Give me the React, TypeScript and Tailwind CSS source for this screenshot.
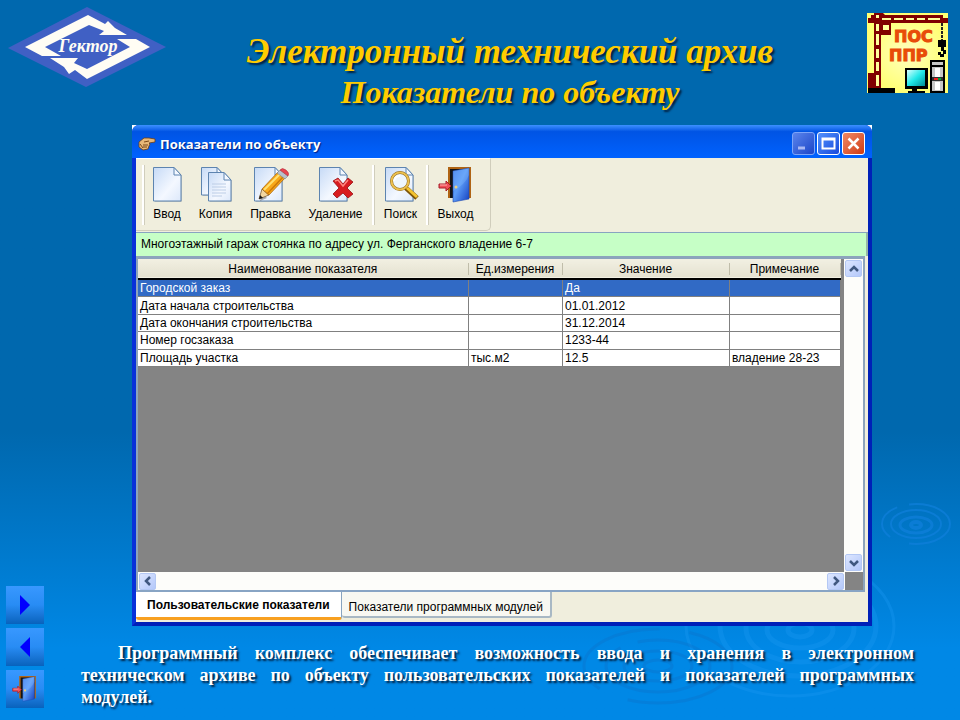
import { ReactNode, useId, useState } from "react";

const rows = [
  ["Городской заказ", "", "Да", ""],
  ["Дата начала строительства", "", "01.01.2012", ""],
  ["Дата окончания строительства", "", "31.12.2014", ""],
  ["Номер госзаказа", "", "1233-44", ""],
  ["Площадь участка", "тыс.м2", "12.5", "владение 28-23"],
];

const tabs = ["Пользовательские показатели", "Показатели программных модулей"];

const Logo = () => (
  <svg viewBox="0 0 160 80" className="mt-[7px] h-20 w-40 shrink-0" role="img" aria-label="Гектор">
    <path d="M80 0 L159 40 L79 80 L1 41 Z" fill="#4060c4" />
    <path
      d="M81 8 L98 17 L101 14 L108 21 L120 28 L92 28 L97 24 L82 18 L38 40 L54 49 L35 49 L18 40 Z"
      fill="#fffdf4"
    />
    <path
      d="M143 40 L80 72 L68 63 L62 67 L57 60 L43 51 L71 51 L67 56 L80 62 L123 40 L110 32 L129 32 Z"
      fill="#fffdf4"
    />
    <text
      x="81"
      y="45"
      textAnchor="middle"
      fill="#fffdf4"
      className="font-['Liberation_Serif',serif] text-[18px] font-bold italic"
    >
      Гектор
    </text>
  </svg>
);

const CraneBadge = () => (
  <svg viewBox="0 0 81 80" className="mt-[13px] h-20 w-[81px] shrink-0" role="img" aria-label="ПОС ППР">
    <defs>
      <linearGradient id="screen" x1="0" y1="0" x2="1" y2="1">
        <stop offset="0" stopColor="#d8ffff" />
        <stop offset=".5" stopColor="#20e8e8" />
        <stop offset="1" stopColor="#008c98" />
      </linearGradient>
      <radialGradient id="badgeGlow">
        <stop offset="0" stopColor="#ffffc0" />
        <stop offset="1" stopColor="#ffff74" />
      </radialGradient>
    </defs>
    <rect width="81" height="80" fill="url(#badgeGlow)" />
    <g fill="#800000">
      <path d="M1 5h3V2h3V0h9l2 2h58v3h5v5H1z" />
      <path d="M7 0h7v75H7zM1 60h7v16H1zM13 9h11v13H13z" />
    </g>
    <g fill="#ffff9c">
      <path d="M9 2h3v3H9zM9 11h3v7H9zM9 21h3v11H9zM9 36h3v9H9zM9 49h3v9H9zM9 62h3v11H9zM16 12h6v5h-6z" />
      <path d="M15 5h9v2h-9zM27 5h9v2h-9zM39 5h8v2h-8zM50 5h8v2h-8zM61 5h12v2H61z" />
    </g>
    <path d="M75 10v17" stroke="#222" strokeWidth="2" strokeDasharray="3 1" />
    <path d="M71 27h8v7h-2v3h2v4h-2v3h-4v-2h-2v-3h3v2h2v-3h-2v-4h-3z" fill="#000" />
    <g
      fill="#e84c08"
      stroke="#e84c08"
      strokeWidth="1"
      className="font-['DejaVu_Sans',sans-serif] text-[16px] font-bold"
    >
      <text x="27" y="29">ПОС</text>
      <text x="22" y="48">ППР</text>
    </g>
    <path d="M1 75h27v5H1zM38 55h23v21H50v2h8v2H41v-2h4v-2h-7zM63 47h15v33H63z" fill="#000" />
    <path d="M40 57h18v16H40z" fill="url(#screen)" />
    <path d="M65 49h11v3H65zM65 54h11v24H65z" fill="#c8c8c8" />
    <path d="M68 55h5v9h-5zM68 69h5v8h-5z" fill="#fff" />
    <path d="M65 64h11v4H65z" fill="#303030" />
    <path d="M67 65h4v2h-4z" fill="#f02020" />
    <path d="M71 65h3v2h-3z" fill="#00a838" />
  </svg>
);

// Water rings on the slide background
const Ripples = () => (
  <svg
    viewBox="0 0 400 240"
    aria-hidden="true"
    fill="none"
    className="pointer-events-none absolute right-0 bottom-0 h-[240px] w-[400px]"
  >
    <g stroke="#1080dc" strokeWidth="2" opacity=".7">
      <ellipse cx="356" cy="45" rx="5" ry="3" strokeWidth="4" />
      <ellipse cx="356" cy="45" rx="16" ry="8" strokeWidth="3" />
      <ellipse cx="356" cy="44" rx="25" ry="14" />
      <ellipse cx="356" cy="44" rx="34" ry="20" strokeDasharray="50 20 40 12" />
    </g>
    <g stroke="#1896f0" strokeWidth="5" opacity=".4">
      <ellipse cx="240" cy="150" rx="12" ry="7" />
      <ellipse cx="240" cy="150" rx="33" ry="18" />
      <ellipse cx="240" cy="148" rx="54" ry="34" />
      <ellipse cx="238" cy="146" rx="78" ry="50" strokeDasharray="260 22" />
      <ellipse cx="230" cy="146" rx="104" ry="70" strokeWidth="3" strokeDasharray="200 40" />
    </g>
    <g stroke="#0a74cc" strokeWidth="3" opacity=".4">
      <ellipse cx="98" cy="186" rx="14" ry="6" />
      <ellipse cx="98" cy="186" rx="34" ry="15" />
      <ellipse cx="98" cy="186" rx="52" ry="26" strokeDasharray="150 18" />
      <ellipse cx="98" cy="186" rx="74" ry="37" strokeDasharray="120 30" />
    </g>
  </svg>
);

const Sheet = ({ x = 0, y = 0, w = 28, h = 34, fill }: { x?: number; y?: number; w?: number; h?: number; fill: string }) => (
  <g transform={`translate(${x} ${y})`}>
    <path d={`M2 8H${w + 1}V${h + 1}H2z`} fill="#88909c" opacity=".4" />
    <path d={`M.5 .5H${w - 7}L${w} 8V${h}H.5z`} fill={fill} stroke="#5d84b0" />
    <path d={`M${w - 7} .5V8H${w}z`} fill="#f4f8ff" stroke="#5d84b0" />
  </g>
);

type IconName = "new" | "copy" | "edit" | "delete" | "search" | "exit";

const Icon = ({ name, className = "h-9 w-9" }: { name: IconName; className?: string }) => {
  const id = useId();
  const paper = `url(#${id}p)`;
  return (
    <svg viewBox="0 0 36 36" aria-hidden="true" className={className}>
      <defs>
        <linearGradient id={`${id}p`} x1="0" y1="0" x2="1" y2="1">
          <stop offset="0" stopColor="#c6daf6" />
          <stop offset=".6" stopColor="#f4f8ff" />
          <stop offset="1" stopColor="#dce8fa" />
        </linearGradient>
        <linearGradient id={`${id}d`} x1="0" y1="0" x2="1" y2="1">
          <stop offset="0" stopColor="#3c78e8" />
          <stop offset=".45" stopColor="#5c9cf8" />
          <stop offset="1" stopColor="#1440c0" />
        </linearGradient>
      </defs>
      {name === "new" && <Sheet x={4} fill={paper} />}
      {name === "copy" && (
        <>
          <Sheet x={3} w={23} h={28} fill={paper} />
          <Sheet x={10} y={5} w={23} h={29} fill={paper} />
          <path d="M14 17h14M14 20h14M14 23h14M14 26h14M14 29h10" stroke="#bccde6" />
        </>
      )}
      {name === "edit" && (
        <>
          <Sheet x={1} fill={paper} />
          <path d="M9 26l5 5-7 3z" fill="#222" opacity=".35" />
          <path d="M6 32l3-10 7 6z" fill="#f2d6a0" stroke="#6d4b20" strokeWidth=".7" />
          <path d="M6 32l1-4 3 3z" fill="#181818" />
          <path d="M9 22L25 5l7 6-16 17z" fill="#f8a818" stroke="#a05c08" strokeWidth=".7" />
          <path d="M11 23L27 7" stroke="#ffe070" strokeWidth="2" />
          <path d="M14 27L30 10" stroke="#cc7808" strokeWidth="1.500" />
          <path d="M24 6l3-3 8 6-3 3z" fill="#b8c0cc" stroke="#707884" strokeWidth=".5" />
          <path d="M27 3q2-3 6 0t2 6z" fill="#e84450" stroke="#a82030" strokeWidth=".5" />
        </>
      )}
      {name === "delete" && (
        <>
          <Sheet x={1} fill={paper} />
          <path d="M15 14l5-3 5 6 5-6 5 4-6 6 6 6-5 4-5-5-6 5-4-4 6-6z" fill="#d81c20" stroke="#981014" strokeWidth=".8" />
          <path d="M17 14l3-1 5 6 5-6" fill="none" stroke="#ff8880" strokeWidth="1.500" />
        </>
      )}
      {name === "search" && (
        <>
          <Sheet x={2} fill={paper} />
          <path d="M23 21l11 10" stroke="#7c5408" strokeWidth="5" />
          <path d="M23 20l11 10" stroke="#f4c430" strokeWidth="3" />
          <circle cx="17" cy="14" r="8.500" fill="#eef6ff" stroke="#8c6414" strokeWidth="3" />
          <circle cx="17" cy="14" r="8.500" fill="none" stroke="#ecc050" strokeWidth="2" />
          <path d="M11 14q1-5 6-5" fill="none" stroke="#fff" strokeWidth="2" />
        </>
      )}
      {name === "exit" && (
        <>
          <path d="M10 0h23v31H10z" fill="#b06414" />
          <path d="M12 2h19v29H12z" fill="#141414" />
          <path d="M15 4l16-3v31l-16 3z" fill={`url(#${id}d)`} stroke="#1c48b0" strokeWidth=".6" />
          <path d="M15 24Q27 18 31 8V1L15 4z" fill="#8cc0ff" opacity=".3" />
          <circle cx="18" cy="20" r="1.500" fill="#ecd080" />
          <path d="M1 17h7v-3l5 5-5 5v-3H1z" fill="#f05058" stroke="#a81c28" />
          <path d="M2 18h7" stroke="#ffb0b0" />
        </>
      )}
    </svg>
  );
};

const ToolButton = ({ icon, label, className }: { icon: IconName; label: string; className: string }) => (
  <button type="button" className={`flex flex-col items-center gap-[3px] text-[12px] leading-4 ${className}`}>
    <Icon name={icon} />
    {label}
  </button>
);

const Grip = () => <span className="h-[60px] w-[3px] border-r border-l-2 border-r-[#d0cdbc] border-l-white" />;

const CaptionButton = ({ label, className, children }: { label: string; className: string; children: ReactNode }) => (
  <button
    type="button"
    aria-label={label}
    className={`flex size-[23px] items-center justify-center rounded-[3px] border ${className}`}
  >
    <svg viewBox="0 0 21 21" className="size-[21px]" fill="none" aria-hidden="true">
      {children}
    </svg>
  </button>
);

const ScrollButton = ({ label, d }: { label: string; d: string }) => (
  <button
    type="button"
    aria-label={label}
    className="flex size-[17px] shrink-0 items-center justify-center rounded-[2px] border border-[#b4c8f4] bg-linear-to-br from-[#dce6ff] to-[#b4c8fa]"
  >
    <svg viewBox="0 0 12 12" className="size-3" fill="none" stroke="#405880" strokeWidth="2.500" aria-hidden="true">
      <path d={d} />
    </svg>
  </button>
);

const NavButton = ({ label, children }: { label: string; children: ReactNode }) => (
  <button
    type="button"
    aria-label={label}
    className="flex size-[38px] items-center justify-center bg-linear-to-b from-[#3898ff] via-[#288cf4] to-[#0862bc]"
  >
    {children}
  </button>
);

const IndicatorTable = () => (
  <table className="h-[108px] w-full table-fixed border-collapse text-left text-[12px] leading-4">
    <colgroup>
      <col />
      <col className="w-[94px]" />
      <col className="w-[167px]" />
      <col className="w-[111px]" />
    </colgroup>
    <thead>
      <tr className="h-5 border-b-2 border-black bg-linear-to-b from-[#f2f0e2] to-[#e4e1d0]">
        {["Наименование показателя", "Ед.измерения", "Значение", "Примечание"].map((title) => (
          <th key={title} scope="col" className="p-0 text-center font-normal whitespace-nowrap">
            <span className="block border-r border-[#c0bdaa] leading-3">{title}</span>
          </th>
        ))}
      </tr>
    </thead>
    <tbody>
      {rows.map((row, i) => (
        <tr key={row[0]} className={i === 0 ? "bg-[#316ac5] text-white" : "bg-white"}>
          {row.map((cell, j) => (
            <td key={j} className="border-r border-b border-[#808080] px-[2px] py-0 whitespace-nowrap">
              {cell}
            </td>
          ))}
        </tr>
      ))}
    </tbody>
  </table>
);

const AppWindow = () => {
  const [tab, setTab] = useState(0);

  return (
    <section className="mx-[88px] flex flex-1 flex-col bg-white font-['Liberation_Sans',Arial,sans-serif] text-black">
      <div className="flex flex-1 flex-col rounded-t-[7px] border-r-4 border-b-4 border-l-4 border-[#0831d9] border-r-[#0020b8] border-b-[#0020b8] bg-[#0054e8]">
        <header className="-mx-1 flex h-[33px] items-center gap-[2px] rounded-t-[7px] bg-linear-to-b from-[#3c90ff] via-[#0054e4] via-20% to-[#0062ff] pt-1 pr-[7px] pl-[6px]">
          <svg viewBox="0 0 18 14" className="mr-[2px] h-3.5 w-[18px]" aria-hidden="true">
            <path
              d="M1 5l5-4h5l6 1v3l-6 1 1 1-1 2-1 3-5 1-4-3z"
              fill="#e8b878"
              stroke="#6c3c14"
              strokeWidth=".8"
            />
            <path d="M6 5l5-1M5 8h5M5 10h4M2 7l3 4" stroke="#7c4818" />
          </svg>
          <h2 className="flex-1 font-['Open_Sans',sans-serif] text-[13px] leading-5 font-bold text-white [text-shadow:1px_1px_1px_#002080]">
            Показатели по объекту
          </h2>
          <CaptionButton label="Свернуть" className="border-[#7ca4f8] bg-linear-to-br from-[#5c84ec] to-[#1c44c8]">
            <path d="M5 15h7" stroke="#a8b8f4" strokeWidth="3" />
          </CaptionButton>
          <CaptionButton label="Развернуть" className="border-white bg-linear-to-br from-[#5490fc] to-[#1848dc]">
            <path d="M4.500 5.500h12v10h-12zM4 6.500h13" stroke="#fff" strokeWidth="2" />
          </CaptionButton>
          <CaptionButton label="Закрыть" className="border-white bg-linear-to-br from-[#f08864] to-[#d03808]">
            <path d="M5.500 5.500l10 10M15.500 5.500l-10 10" stroke="#fff" strokeWidth="2.500" />
          </CaptionButton>
        </header>

        <div className="flex flex-1 flex-col bg-[#f0eedd]">
          <div className="flex h-[75px] border-b border-[#88a4c0]">
            <div className="flex h-[73px] items-center rounded-br-[5px] border-t border-r border-b border-[#d0cdbc] border-t-white pr-2 pl-[6px]">
              <Grip />
              <ToolButton icon="new" label="Ввод" className="w-11" />
              <ToolButton icon="copy" label="Копия" className="w-[53px]" />
              <ToolButton icon="edit" label="Правка" className="w-[57px]" />
              <ToolButton icon="delete" label="Удаление" className="w-[73px]" />
              <Grip />
              <ToolButton icon="search" label="Поиск" className="w-[51px]" />
              <Grip />
              <ToolButton icon="exit" label="Выход" className="w-[53px]" />
            </div>
          </div>
          <p className="h-[23px] border-r-2 border-[#98b8a8] bg-[#c6ffc6] pl-[5px] text-[12px] leading-[22px]">
            Многоэтажный гараж стоянка по адресу ул. Ферганского владение 6-7
          </p>

          <div className="mr-[3px] flex flex-1 flex-col border-2 border-t-[3px] border-[#8ca4bc] border-b-[#88a4c4]">
            <div className="flex flex-1">
              <div className="flex-1 bg-[#848484] pr-[3px]">
                <IndicatorTable />
              </div>
              <div className="flex w-[19px] flex-col items-center justify-between bg-[#fdfdfa] py-px">
                <ScrollButton label="Вверх" d="M2 8l4-4 4 4" />
                <ScrollButton label="Вниз" d="M2 4l4 4 4-4" />
              </div>
            </div>
            <div className="flex h-[18px]">
              <div className="flex flex-1 items-center justify-between bg-[#fdfdfa] px-px">
                <ScrollButton label="Влево" d="M8 2L4 6l4 4" />
                <ScrollButton label="Вправо" d="M4 2l4 4-4 4" />
              </div>
              <span className="w-[18px] bg-[#848484]" />
            </div>
          </div>

          <div role="tablist" className="flex h-[30px] items-start">
            {tabs.map((label, i) => (
              <button
                key={label}
                type="button"
                role="tab"
                aria-selected={tab === i}
                onClick={() => setTab(i)}
                className={
                  tab === i
                    ? "h-7 rounded-b-[3px] border-r border-b-[3px] border-r-[#88a4c0] border-b-[#f8a020] bg-white px-[11px] text-[12px] font-bold"
                    : "h-[26px] rounded-b-[3px] border-r-2 border-b-2 border-[#a8b8c4] bg-[#f8f8f2] px-[7px] pt-[6px] text-[12px]"
                }
              >
                {label}
              </button>
            ))}
          </div>
        </div>
      </div>
    </section>
  );
};

export default function App() {
  return (
    <div className="relative flex min-h-screen flex-col bg-linear-to-b from-[#0068ae] from-60% to-[#0088e6] to-90% font-['Liberation_Serif','Times_New_Roman',serif]">
      <Ripples />
      <header className="relative flex h-[125px] items-start pr-3 pl-[7px]">
        <Logo />
        <h1 className="flex-1 pt-8 pr-3.5 text-center text-[35px] leading-10 font-bold text-[#ffcc00] italic [text-shadow:2px_2px_2px_#002040]">
          Электронный технический архив
          <span className="block text-[32px]">Показатели по объекту</span>
        </h1>
        <CraneBadge />
      </header>

      <main className="relative flex flex-1 pb-3 pl-[6px]">
        <nav className="flex flex-col justify-end gap-1">
          <NavButton label="Вперёд">
            <svg viewBox="0 0 10 20" className="h-5 w-2.5" fill="#0000ff" aria-hidden="true">
              <path d="M0 0l10 10L0 20z" />
            </svg>
          </NavButton>
          <NavButton label="Назад">
            <svg viewBox="0 0 10 20" className="h-5 w-2.5" fill="#0000ff" aria-hidden="true">
              <path d="M10 0L0 10l10 10z" />
            </svg>
          </NavButton>
          <NavButton label="Выход">
            <Icon name="exit" className="size-[26px]" />
          </NavButton>
        </nav>

        <div className="flex flex-1 flex-col">
          <AppWindow />
          <p className="mt-4 mr-[46px] ml-[37px] text-justify text-[18px] leading-[22px] font-bold text-white [text-shadow:2px_2px_2px_#002040]">
            <span className="block indent-[37px] [text-align-last:justify]">
              Программный комплекс обеспечивает возможность ввода и хранения в электронном техническом архиве по
              объекту пользовательских показателей и показателей программных
            </span>{" "}
            модулей.
          </p>
        </div>
      </main>
    </div>
  );
}
